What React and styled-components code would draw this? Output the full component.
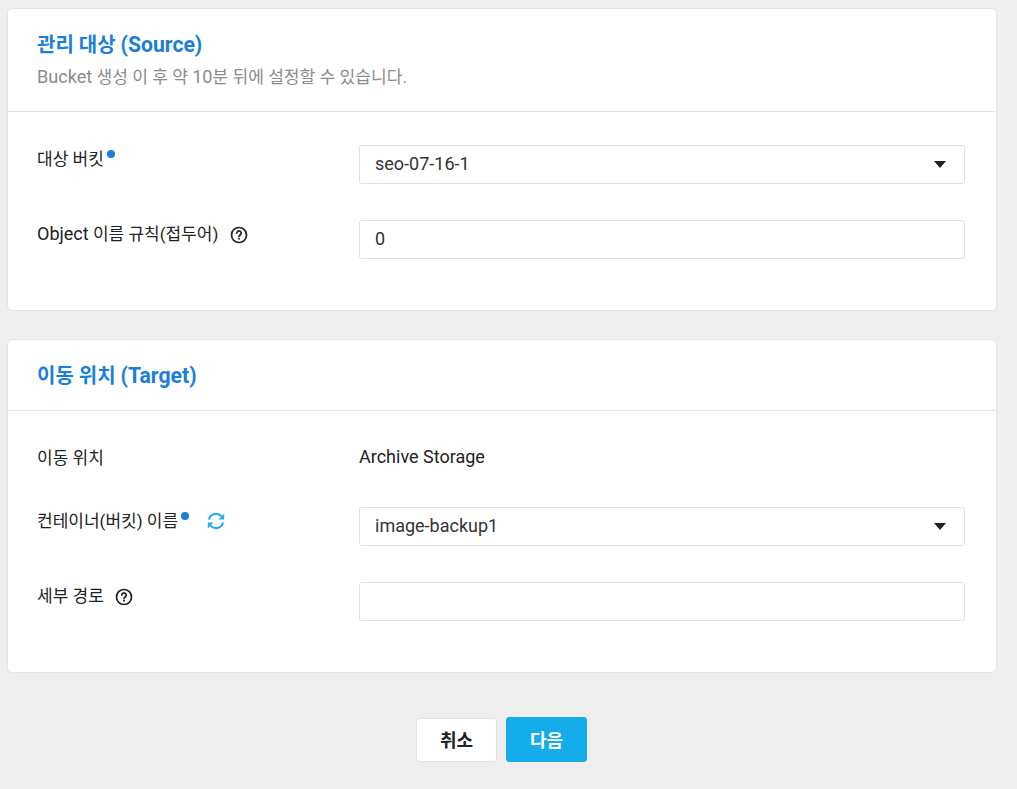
import React from 'react';
import styled, { createGlobalStyle } from 'styled-components';

const GlobalStyle = createGlobalStyle`
  html, body {
    margin: 0;
    padding: 0;
    background: #efefef;
  }
  body {
    font-family: Roboto, "Noto Sans CJK KR", sans-serif;
    font-size: 17px;
    color: #222;
  }
  * {
    box-sizing: border-box;
  }
`;

const Page = styled.div`
  display: flex;
  flex-direction: column;
  gap: 28px;
  height: 789px;
  overflow: hidden;
  padding: 8px 20px 0 7px;
`;

const Card = styled.section`
  background: #fff;
  border: 1px solid #e4e4e4;
  border-radius: 5px;
`;

const CardHeader = styled.header`
  padding: 23px 29px 21px;
  border-bottom: 1px solid #e2e2e2;
`;

const Title = styled.h2`
  margin: 0;
  font-size: 20px;
  line-height: 26px;
  font-weight: 700;
  color: #1a7fd9;
`;

const Subtitle = styled.p`
  margin: 7px 0 1px;
  font-size: 17.1px;
  line-height: 24px;
  color: #8c8c8c;
`;

// latin runs are set a little larger than the hangul around them
const Latin = styled.span`
  font-size: 1.06em;
`;

const CardBody = styled.div`
  display: flex;
  flex-direction: column;
  gap: 36px;
  padding: 33px 31px 51px 29px;
`;

const Row = styled.div`
  display: grid;
  grid-template-columns: 322px 1fr;
  align-items: start;
`;

const Label = styled.div`
  display: flex;
  align-items: center;
  height: 27px;
  padding-top: 1px;
  line-height: 25px;
  font-size: 17px;
  color: #222;
`;

const LabelText = styled.span`
  white-space: pre;
`;

const Required = styled.span`
  align-self: flex-start;
  width: 8px;
  height: 8px;
  margin: 4px 0 0 3px;
  border-radius: 50%;
  background: #1a7fd9;
`;

const IconWrap = styled.span`
  display: inline-flex;
  margin-left: ${(p) => p.$gap}px;
  margin-top: ${(p) => p.$drop || 0}px;
`;

const Value = styled.div`
  font-size: 18px;
  line-height: 25px;
  color: #222;
`;

const Field = styled.div`
  display: flex;
  align-items: center;
  justify-content: space-between;
  height: 39px;
  padding: 0 18px 2px 15px;
  background: #fff;
  border: 1px solid #e0e0e0;
  border-radius: 3px;
  font-size: 18px;
  color: #333;
`;

const Caret = styled.span`
  width: 0;
  height: 0;
  margin-top: 2px;
  border-left: 6px solid transparent;
  border-right: 6px solid transparent;
  border-top: 7px solid #222;
`;

const Actions = styled.div`
  display: flex;
  justify-content: center;
  align-items: center;
  gap: 9px;
  margin-top: 16px;
  padding-right: 1px;
`;

const Button = styled.button`
  width: 81px;
  height: ${(p) => (p.$primary ? 45 : 44)}px;
  padding: 0 0 2px;
  border: 1px solid ${(p) => (p.$primary ? '#15aceb' : '#e2e2e2')};
  border-radius: 3px;
  background: ${(p) => (p.$primary ? '#15aceb' : '#fff')};
  color: ${(p) => (p.$primary ? '#fff' : '#222')};
  font-family: inherit;
  font-size: 18px;
  font-weight: 700;
`;

const HelpIcon = () => (
  <svg width="18" height="18" viewBox="0 0 18 18" fill="none" stroke="#222" strokeWidth="1.7" strokeLinecap="round">
    <circle cx="9" cy="9" r="7.5" />
    <path d="M6.8 7.1a2.2 2.2 0 1 1 3.4 1.9c-.8.5-1.2.9-1.2 1.6" />
    <circle cx="9" cy="12.8" r=".5" fill="#222" strokeWidth="1" />
  </svg>
);

const RefreshIcon = () => (
  <svg width="18" height="18" viewBox="0 0 18 18" fill="none" stroke="#22aeea" strokeWidth="2.1">
    <path d="M2 7.6A7.1 7.1 0 0 1 14.4 4.4" />
    <path d="M16 10.4A7.1 7.1 0 0 1 3.6 13.6" />
    <path d="M17.2 1.6v5.8h-5.8z" fill="#22aeea" stroke="none" />
    <path d="M.8 16.4v-5.8h5.8z" fill="#22aeea" stroke="none" />
  </svg>
);

const App = () => (
  <Page>
    <GlobalStyle />
    <Card>
      <CardHeader>
        <Title>관리 대상 <Latin>(Source)</Latin></Title>
        <Subtitle><Latin>Bucket</Latin> 생성 이 후 약 <Latin>10</Latin>분 뒤에 설정할 수 있습니다.</Subtitle>
      </CardHeader>
      <CardBody>
        <Row>
          <Label>
            <LabelText>대상 버킷</LabelText>
            <Required />
          </Label>
          <Field>
            seo-07-16-1
            <Caret />
          </Field>
        </Row>
        <Row>
          <Label>
            <LabelText><Latin>Object</Latin> 이름 규칙(접두어)</LabelText>
            <IconWrap $gap={12} $drop={1}>
              <HelpIcon />
            </IconWrap>
          </Label>
          <Field>0</Field>
        </Row>
      </CardBody>
    </Card>
    <Card>
      <CardHeader>
        <Title>이동 위치 <Latin>(Target)</Latin></Title>
      </CardHeader>
      <CardBody>
        <Row>
          <Label>
            <LabelText>이동 위치</LabelText>
          </Label>
          <Value>Archive Storage</Value>
        </Row>
        <Row>
          <Label>
            <LabelText>컨테이너(버킷) 이름</LabelText>
            <Required />
            <IconWrap $gap={18} $drop={-1}>
              <RefreshIcon />
            </IconWrap>
          </Label>
          <Field>
            image-backup1
            <Caret />
          </Field>
        </Row>
        <Row>
          <Label>
            <LabelText>세부 경로</LabelText>
            <IconWrap $gap={11} $drop={1}>
              <HelpIcon />
            </IconWrap>
          </Label>
          <Field />
        </Row>
      </CardBody>
    </Card>
    <Actions>
      <Button>취소</Button>
      <Button $primary>다음</Button>
    </Actions>
  </Page>
);

export default App;
